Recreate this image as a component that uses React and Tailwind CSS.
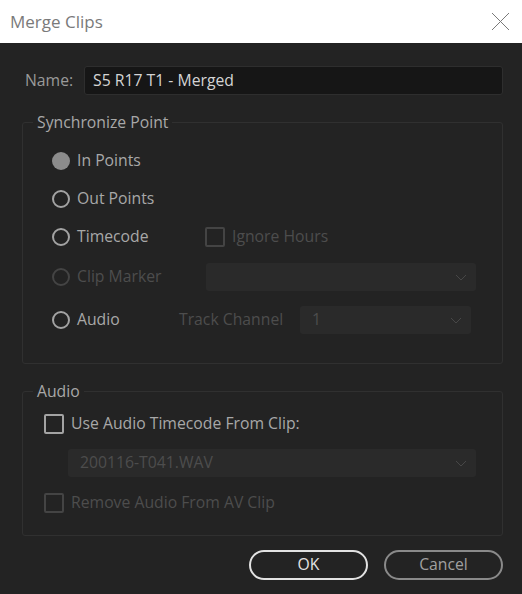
import React from 'react';

const font = { fontFamily: '"Open Sans", "Noto Sans", sans-serif' };

const Radio = ({ checked, disabled }) => {
  if (checked) {
    return <span className="w-[18px] h-[18px] rounded-full bg-[#8c8c8c] shrink-0" />;
  }
  return (
    <span
      className={
        'w-[18px] h-[18px] rounded-full border-2 shrink-0 ' +
        (disabled ? 'border-[#444444]' : 'border-[#a3a3a3]')
      }
    />
  );
};

const Check = ({ disabled }) => (
  <span
    className={
      'w-[20px] h-[20px] rounded-[2px] border-2 shrink-0 ' +
      (disabled ? 'border-[#444444]' : 'border-[#a3a3a3]')
    }
  />
);

const Chevron = () => (
  <svg width="12" height="7" viewBox="0 0 12 7" className="shrink-0">
    <path d="M1 1 L6 6 L11 1" fill="none" stroke="#474747" strokeWidth="1" />
  </svg>
);

const Dropdown = ({ className, value }) => (
  <div
    className={
      'h-[28px] rounded-[3px] bg-[#2a2a2a] flex items-center justify-between pl-3 pr-[9px] text-[#4d4d4d] ' +
      className
    }
  >
    <span>{value}</span>
    <Chevron />
  </div>
);

export default function App() {
  return (
    <div className="w-[522px] h-[594px] bg-[#232323] flex flex-col text-[15.75px]" style={font}>
      {/* title bar */}
      <div className="h-[43px] bg-white flex items-center justify-between pl-[10px] pr-[12px] shrink-0">
        <span className="text-[17px] text-[#7a7a7a]">Merge Clips</span>
        <svg width="19" height="19" viewBox="0 0 19 19">
          <path d="M1 1 L18 18 M18 1 L1 18" stroke="#7a7a7a" strokeWidth="1" />
        </svg>
      </div>

      <div className="flex flex-col pl-[22px] pr-[19px] pt-[23px]">
        {/* name */}
        <div className="flex items-center">
          <span className="w-[62px] pl-[3px] text-[#9a9a9a]">Name:</span>
          <div className="flex-1 h-[29px] bg-[#161616] border border-[#2e2e2e] rounded-[3px] flex items-center pl-[8px] text-[#d4d4d4]">
            S5 R17 T1 - Merged
          </div>
        </div>

        {/* synchronize point */}
        <fieldset className="mt-[17px] border border-[#303030] rounded-[3px] p-0">
          <legend className="ml-[10px] px-[4px] leading-[20px] text-[#a8a8a8]">Synchronize Point</legend>
          <div className="pl-[29px] pr-[26px] pt-[10px] pb-[21px]">
            <div className="h-[38px] flex items-center gap-[7px] text-[#a8a8a8]">
              <Radio checked />
              <span>In Points</span>
            </div>
            <div className="h-[38px] flex items-center gap-[7px] text-[#a8a8a8]">
              <Radio />
              <span>Out Points</span>
            </div>
            <div className="h-[38px] flex items-center">
              <div className="w-[153px] flex items-center gap-[7px] text-[#a8a8a8]">
                <Radio />
                <span>Timecode</span>
              </div>
              <div className="flex items-center gap-[7px] text-[#4d4d4d]">
                <Check disabled />
                <span>Ignore Hours</span>
              </div>
            </div>
            <div className="h-[42px] flex items-center">
              <div className="w-[154px] flex items-center gap-[7px] text-[#4d4d4d]">
                <Radio disabled />
                <span>Clip Marker</span>
              </div>
              <Dropdown className="flex-1" value="" />
            </div>
            <div className="h-[44px] flex items-center">
              <div className="w-[127px] flex items-center gap-[7px] text-[#a8a8a8]">
                <Radio />
                <span>Audio</span>
              </div>
              <span className="w-[121px] text-[#4d4d4d]">Track Channel</span>
              <Dropdown className="w-[171px]" value="1" />
            </div>
          </div>
        </fieldset>

        {/* audio */}
        <fieldset className="mt-[17px] border border-[#303030] rounded-[3px] p-0">
          <legend className="ml-[10px] px-[4px] leading-[20px] text-[#a8a8a8]">Audio</legend>
          <div className="pl-[21px] pr-[26px] pt-[10px] pb-[19px]">
            <div className="h-[26px] flex items-center gap-[7px] text-[#a8a8a8]">
              <Check />
              <span>Use Audio Timecode From Clip:</span>
            </div>
            <Dropdown className="mt-[12px] ml-[24px]" value="200116-T041.WAV" />
            <div className="mt-[13px] h-[26px] flex items-center gap-[7px] text-[#4d4d4d]">
              <Check disabled />
              <span>Remove Audio From AV Clip</span>
            </div>
          </div>
        </fieldset>

        {/* buttons */}
        <div className="mt-[14px] flex justify-end gap-[16px]">
          <button className="w-[119px] h-[30px] rounded-full border-2 border-[#e2e2e2] text-[#e2e2e2] flex items-center justify-center">
            OK
          </button>
          <button className="w-[119px] h-[30px] rounded-full border-2 border-[#8a8a8a] text-[#a0a0a0] flex items-center justify-center">
            Cancel
          </button>
        </div>
      </div>
    </div>
  );
}
